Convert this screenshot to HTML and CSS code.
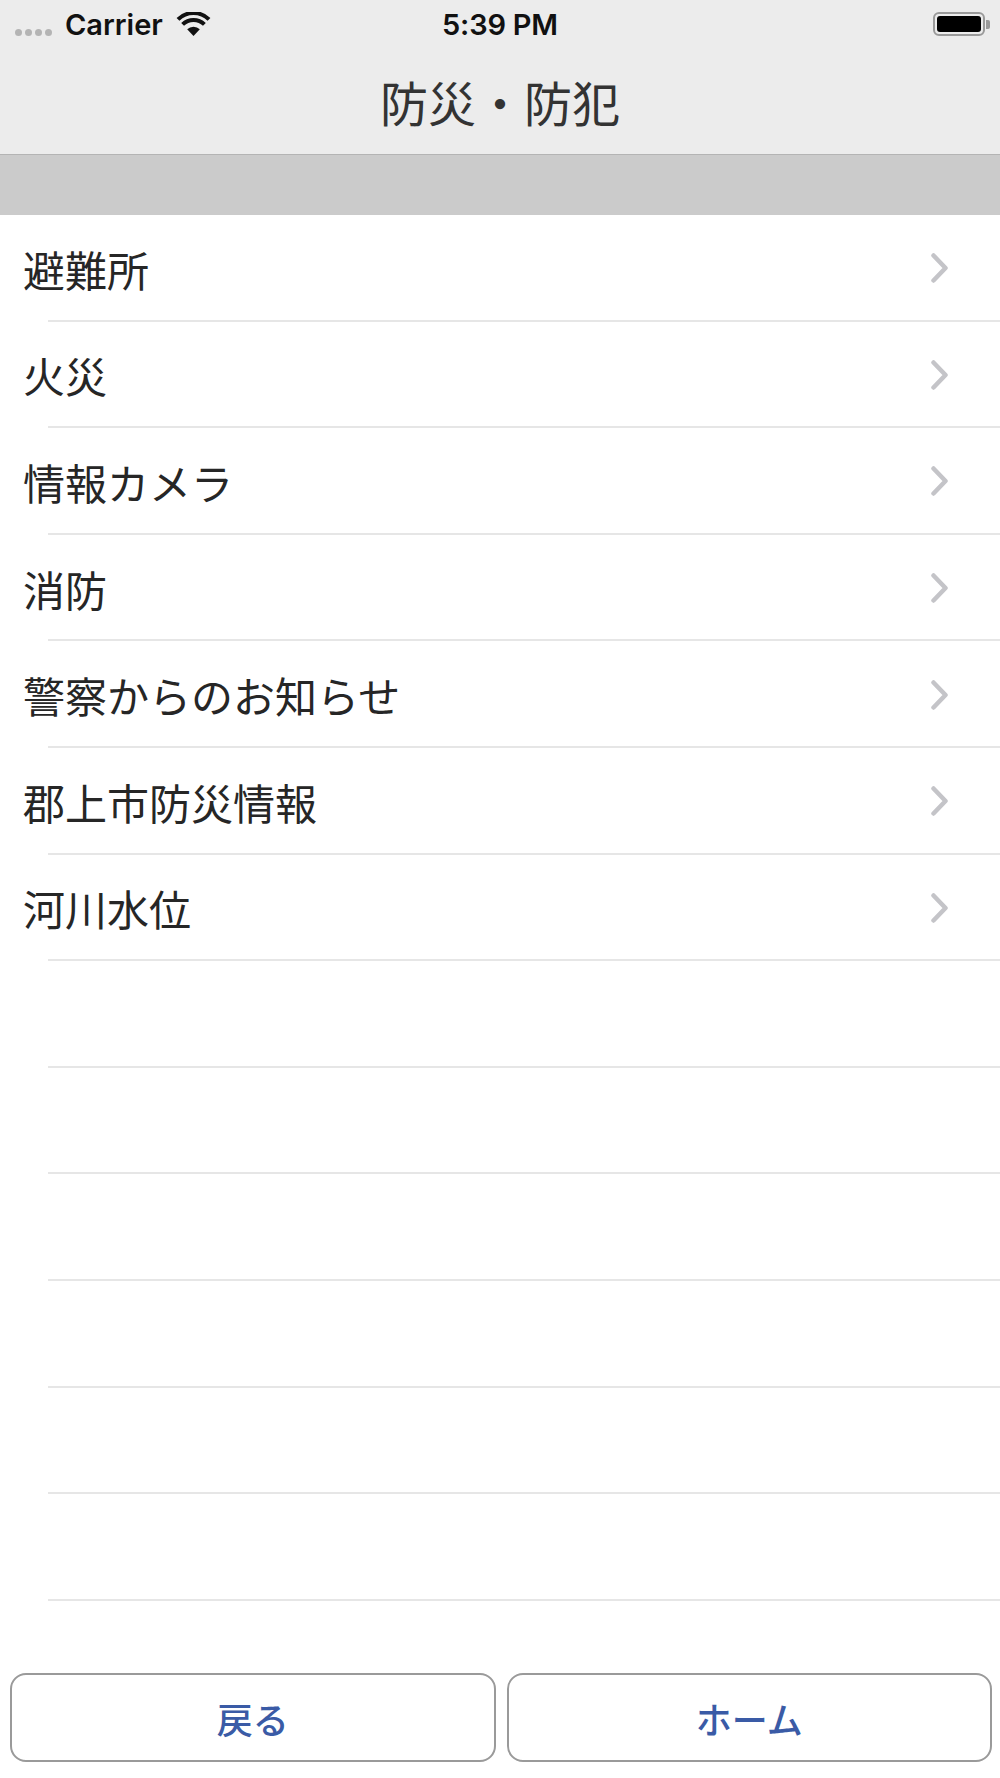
FILE: index.html
```html
<!DOCTYPE html>
<html lang="ja">
<head>
    <meta charset="UTF-8">
    <meta name="viewport" content="width=device-width, initial-scale=1.0">
    <title>防災・防犯</title>
    <link rel="stylesheet" href="styles.css">
</head>
<body>
    <div class="screen">
        <!-- Status bar -->
        <div class="status-bar">
            <div class="status-left">
                <span class="signal">
                    <i></i><i></i><i></i><i></i>
                </span>
                <span class="carrier">Carrier</span>
                <svg class="wifi" width="37" height="25" viewBox="0 0 37 25">
                    <path d="M18.5 24 L12.2 17.2 A9 9 0 0 1 24.8 17.2 Z" fill="#111"/>
                    <path d="M7.6 12.4 A15.5 15.5 0 0 1 29.4 12.4" fill="none" stroke="#111" stroke-width="4"/>
                    <path d="M3 7.4 A22 22 0 0 1 34 7.4" fill="none" stroke="#111" stroke-width="4"/>
                </svg>
            </div>
            <div class="status-time">5:39 PM</div>
            <div class="status-right">
                <span class="battery"><span class="battery-fill"></span></span>
                <span class="battery-cap"></span>
            </div>
        </div>

        <!-- Navigation bar -->
        <div class="nav-bar">
            <h1 class="nav-title">防災・防犯</h1>
        </div>

        <div class="section-header"></div>

        <!-- Menu list -->
        <ul class="menu-list">
            <li class="menu-item"><span>避難所</span><svg class="chevron" width="17" height="30" viewBox="0 0 17 30"><polyline points="2.5,2.5 14.5,15 2.5,27.5"/></svg></li>
            <li class="menu-item"><span>火災</span><svg class="chevron" width="17" height="30" viewBox="0 0 17 30"><polyline points="2.5,2.5 14.5,15 2.5,27.5"/></svg></li>
            <li class="menu-item"><span>情報カメラ</span><svg class="chevron" width="17" height="30" viewBox="0 0 17 30"><polyline points="2.5,2.5 14.5,15 2.5,27.5"/></svg></li>
            <li class="menu-item"><span>消防</span><svg class="chevron" width="17" height="30" viewBox="0 0 17 30"><polyline points="2.5,2.5 14.5,15 2.5,27.5"/></svg></li>
            <li class="menu-item"><span>警察からのお知らせ</span><svg class="chevron" width="17" height="30" viewBox="0 0 17 30"><polyline points="2.5,2.5 14.5,15 2.5,27.5"/></svg></li>
            <li class="menu-item"><span>郡上市防災情報</span><svg class="chevron" width="17" height="30" viewBox="0 0 17 30"><polyline points="2.5,2.5 14.5,15 2.5,27.5"/></svg></li>
            <li class="menu-item"><span>河川水位</span><svg class="chevron" width="17" height="30" viewBox="0 0 17 30"><polyline points="2.5,2.5 14.5,15 2.5,27.5"/></svg></li>
            <li class="menu-item empty"></li>
            <li class="menu-item empty"></li>
            <li class="menu-item empty"></li>
            <li class="menu-item empty"></li>
            <li class="menu-item empty"></li>
            <li class="menu-item empty"></li>
        </ul>

        <!-- Footer buttons -->
        <div class="footer">
            <button class="button">戻る</button>
            <button class="button">ホーム</button>
        </div>
    </div>
</body>
</html>
```

FILE: styles.css
```css
* {
    box-sizing: border-box;
}
body {
    margin: 0;
    background-color: #fff;
    font-family: "Noto Sans CJK JP", "Noto Sans", sans-serif;
}
.screen {
    display: flex;
    flex-direction: column;
    height: 100vh;
}

/* Status bar */
.status-bar {
    display: grid;
    grid-template-columns: 1fr auto 1fr;
    align-items: center;
    height: 48px;
    background-color: #ececec;
    font-family: Inter, "Liberation Sans", sans-serif;
    font-size: 28px;
    font-weight: 600;
    color: #111;
}
.status-left {
    display: flex;
    align-items: center;
    padding-left: 15px;
}
.signal {
    display: flex;
    gap: 3px;
    margin-top: 16px;
    margin-right: 13px;
}
.signal i {
    width: 7px;
    height: 7px;
    border-radius: 50%;
    background-color: #b4b4b4;
}
.carrier {
    font-size: 29px;
}
.wifi {
    margin-left: 12px;
    margin-top: 1px;
}
.status-time {
    font-size: 29px;
    letter-spacing: -0.2px;
}
.status-right {
    display: flex;
    align-items: center;
    justify-content: flex-end;
    padding-right: 10px;
}
.battery {
    width: 52px;
    height: 24px;
    border: 2px solid #9a9a9a;
    border-radius: 6px;
    padding: 2px;
}
.battery-fill {
    display: block;
    height: 100%;
    background-color: #000;
    border-radius: 3px;
}
.battery-cap {
    width: 4px;
    height: 9px;
    margin-left: 1px;
    background-color: #9a9a9a;
    border-radius: 0 2px 2px 0;
}

/* Navigation bar */
.nav-bar {
    display: flex;
    align-items: center;
    justify-content: center;
    height: 107px;
    background-color: #ececec;
    border-bottom: 1px solid #b4b4b4;
}
.nav-title {
    margin: 0;
    font-size: 48px;
    font-weight: 400;
    color: #333;
}
.section-header {
    height: 60px;
    background-color: #cbcbcb;
}

/* List */
.menu-list {
    list-style: none;
    margin: 0;
    padding: 0;
}
.menu-item {
    position: relative;
    display: flex;
    align-items: center;
    justify-content: space-between;
    height: 106.6px;
    padding: 0 52px 0 23px;
    font-size: 42px;
    color: #262626;
}
.menu-item::after {
    content: "";
    position: absolute;
    left: 48px;
    right: 0;
    bottom: 0;
    height: 2px;
    background-color: #e6e6e6;
}
.chevron polyline {
    fill: none;
    stroke: #c4c4c8;
    stroke-width: 4.5;
    stroke-linecap: round;
    stroke-linejoin: round;
}

/* Footer */
.footer {
    display: grid;
    grid-template-columns: 1fr 1fr;
    gap: 11px;
    margin-top: auto;
    padding: 0 8px 16px 10px;
}
.button {
    height: 89px;
    background-color: #fff;
    border: 2px solid #9a9a9a;
    border-radius: 16px;
    font-family: "Noto Sans CJK JP", sans-serif;
    font-size: 36px;
    font-weight: 500;
    color: #3a5ba6;
    cursor: pointer;
}
```
